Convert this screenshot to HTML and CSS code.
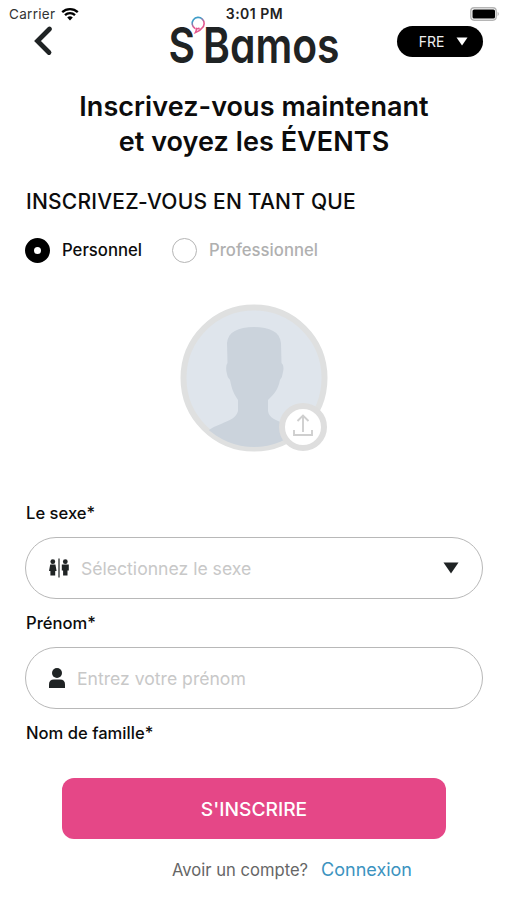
FILE: index.html
```html
<!DOCTYPE html>
<html lang="fr">
<head>
    <meta charset="UTF-8">
    <meta name="viewport" content="width=device-width, initial-scale=1.0">
    <title>S'Bamos - Inscription</title>
    <link rel="stylesheet" href="styles.css">
</head>
<body>

    <div class="status-bar">
        <div class="carrier">
            <span>Carrier</span>
            <svg width="18" height="14" viewBox="0 0 18 14">
                <path d="M1.2 5.2a11.2 11.2 0 0 1 15.6 0M4 8.2a7.2 7.2 0 0 1 10 0" fill="none" stroke="#000" stroke-width="2.3"/>
                <path d="M9 13.6l-2.8-3a4 4 0 0 1 5.6 0z" fill="#000"/>
            </svg>
        </div>
        <span class="time">3:01 PM</span>
        <svg class="battery" width="30" height="14" viewBox="0 0 30 14">
            <rect x="0.8" y="0.8" width="25.4" height="12.4" rx="3.4" fill="#fff" stroke="#b5b5b5" stroke-width="1.4"/>
            <rect x="2.5" y="2.5" width="22.5" height="9" rx="1.6" fill="#000"/>
            <path d="M27.6 4.8q2.6 2.2 0 4.4z" fill="#b5b5b5"/>
        </svg>
    </div>

    <header class="header">
        <button class="back" aria-label="Retour">
            <svg width="20" height="32" viewBox="0 0 20 32">
                <path d="M16.5 4L4.5 16l11.5 11.500" fill="none" stroke="#1f2324" stroke-width="4.8" stroke-linecap="round"/>
            </svg>
        </button>
        <svg class="logo" width="172" height="52" viewBox="0 0 172 52">
            <defs>
                <linearGradient id="bubble" x1="0" y1="0" x2="0.4" y2="1">
                    <stop offset="0.25" stop-color="#3f9dc8"/>
                    <stop offset="0.6" stop-color="#e4588f"/>
                </linearGradient>
            </defs>
            <text x="-1.500" y="47.500" textLength="26.500" lengthAdjust="spacingAndGlyphs">S</text>
            <text x="33" y="47.500" textLength="136.500" lengthAdjust="spacingAndGlyphs">Bamos</text>
            <path d="M25 13.500a6 6 0 1 1 7 -.500q-2 3-6.500 4.500q1.500-2.500 .500-4.500q1.500 1.500 3.500 0" fill="none" stroke="url(#bubble)" stroke-width="1.600"/>
        </svg>
        <button class="lang">
            <span>FRE</span>
            <svg width="12" height="9" viewBox="0 0 12 9"><path d="M.5.500h11L6 8.500z" fill="#fff"/></svg>
        </button>
    </header>

    <main class="content">
        <h1 class="title">Inscrivez-vous maintenant<br>et voyez les ÉVENTS</h1>

        <h2 class="subtitle">INSCRIVEZ-VOUS EN TANT QUE</h2>

        <div class="types">
            <div class="type selected">
                <span class="radio"></span>
                <span>Personnel</span>
            </div>
            <div class="type">
                <span class="radio"></span>
                <span>Professionnel</span>
            </div>
        </div>

        <div class="avatar">
            <svg width="148" height="148" viewBox="0 0 148 148">
                <defs>
                    <clipPath id="face"><circle cx="74" cy="74" r="69"/></clipPath>
                </defs>
                <circle cx="74" cy="74" r="70.500" fill="#dfe5ec" stroke="#dfe0e0" stroke-width="6"/>
                <path clip-path="url(#face)" fill="#cbd3dc" d="M47 39C48 28 58 23 74 23s26 5 27 16l.500 20q3 2 1.500 9-.500 5-3 8c-2 10-6 14-12 20v11c1 7 8 9 17 13q14 5 19 13v20H22v-20q5-8 19-13c9-4 15-6 17-13V96c-4-6-6-10-8-20q-3-3-3.500-8-1-7 1-9z"/>
            </svg>
            <!-- Upload badge -->
            <svg class="upload" width="48" height="48" viewBox="0 0 48 48">
                <circle cx="24" cy="24" r="21" fill="#fff" stroke="#dedede" stroke-width="6"/>
                <path d="M24 29V13M18.500 18l5.500-5.500 5.500 5.500M15 27v5h18v-5" fill="none" stroke="#cfcfcf" stroke-width="1.900"/>
            </svg>
        </div>

        <div class="field">
            <label class="label">Le sexe*</label>
            <div class="input">
                <svg width="20" height="20" viewBox="0 0 20 20" fill="#1f2324">
                    <rect x="9.400" y="0.500" width="1.200" height="19"/>
                    <circle cx="3.800" cy="3.700" r="2.400"/>
                    <path d="M1.200 6.500h5.200l1.200 6.500H6.200v4.500H1.400V13H0z"/>
                    <circle cx="16.300" cy="3.700" r="2.400"/>
                    <path d="M12.800 6.500h7v6h-1.300v5h-4.400v-5h-1.300z"/>
                </svg>
                <span class="placeholder">Sélectionnez le sexe</span>
                <svg class="arrow" width="16" height="12" viewBox="0 0 16 12"><path d="M.5.500h15L8 11.500z" fill="#1f2324"/></svg>
            </div>
        </div>

        <div class="field">
            <label class="label">Prénom*</label>
            <div class="input">
                <svg width="16" height="20" viewBox="0 0 16 20" fill="#1f2324">
                    <circle cx="8" cy="5" r="5"/>
                    <path d="M0 20v-3.500Q0 11.500 5 11.500h6q5 0 5 5V20z"/>
                </svg>
                <span class="placeholder">Entrez votre prénom</span>
            </div>
        </div>

        <div class="field">
            <label class="label">Nom de famille*</label>
        </div>
    </main>

    <footer class="footer">
        <button class="submit">S'INSCRIRE</button>
        <p class="login"><span class="question">Avoir un compte?</span> <a class="link" href="#">Connexion</a></p>
    </footer>

</body>
</html>
```

FILE: styles.css
```css
* {
    box-sizing: border-box;
}
body {
    margin: 0;
    height: 900px;
    overflow: hidden;
    background-color: #fff;
    color: #0c0c0c;
    font-family: Inter, "Liberation Sans", sans-serif;
}
button {
    padding: 0;
    border: none;
    font-family: inherit;
    cursor: pointer;
}
svg {
    display: block;
    flex-shrink: 0;
}
.status-bar {
    display: grid;
    grid-template-columns: 1fr auto 1fr;
    align-items: center;
    height: 26px;
    padding: 1px 7px 0 9px;
    font-size: 13px;
    color: #333;
}
.carrier {
    display: flex;
    align-items: center;
    gap: 6px;
    font-size: 13.5px;
    letter-spacing: 0.3px;
}
.time {
    font-size: 14px;
    letter-spacing: 0.5px;
    font-weight: 600;
    color: #222;
}
.battery {
    justify-self: end;
}
.header {
    display: flex;
    align-items: center;
    justify-content: space-between;
    height: 30px;
    padding: 0 24px 0 33px;
}
.back {
    background: none;
}
.logo {
    margin-left: 61px;
    overflow: visible;
    font-size: 50px;
    font-weight: 600;
    font-feature-settings: "cv11"; /* round single-storey a */
    fill: #1f2324;
}
.lang {
    display: flex;
    align-items: center;
    justify-content: center;
    gap: 12px;
    width: 86px;
    height: 31px;
    padding-left: 7px;
    border-radius: 16px;
    background-color: #000;
    color: #eee;
    font-size: 14px;
}
.content {
    padding: 33px 24px 0 25px;
}
.title {
    margin: 0;
    font-size: 27px;
    line-height: 35px;
    font-weight: 600;
    letter-spacing: 0.06px;
    text-align: center;
}
.subtitle {
    margin: 30px 0 0 1px;
    font-size: 21px;
    line-height: 26px;
    font-weight: 500;
    letter-spacing: 0.22px;
}
.types {
    display: flex;
    gap: 30px;
    margin-top: 22px;
}
.type {
    display: flex;
    align-items: center;
    gap: 12px;
    height: 26px;
    font-size: 16.7px;
    font-weight: 500;
    color: #b0b0b0;
}
.type.selected {
    color: #0c0c0c;
}
.radio {
    width: 25px;
    height: 25px;
    border: 1.5px solid #b5b5b5;
    border-radius: 50%;
}
.selected .radio {
    border: 9px solid #000;
}
.avatar {
    position: relative;
    width: 148px;
    margin: 41px auto 49px;
}
.upload {
    position: absolute;
    right: 1px;
    bottom: 1px;
}
.field {
    height: 110px;
}
.label {
    display: block;
    height: 25px;
    padding-left: 1px;
    line-height: 25px;
    font-size: 16.6px;
    font-weight: 500;
}
.input {
    display: flex;
    align-items: center;
    gap: 12px;
    height: 62px;
    margin-top: 11px;
    padding: 0 23px;
    border: 1.5px solid #b8b8b8;
    border-radius: 31px;
}
.placeholder {
    font-size: 17.6px;
    color: #c8c8c8;
}
.arrow {
    margin-left: auto;
}
.footer {
    position: absolute;
    left: 0;
    right: 0;
    bottom: 0;
    height: 140px;
    padding: 18px 61px 0 62px;
    background-color: #fff;
}
.submit {
    width: 100%;
    height: 61px;
    border-radius: 12px;
    background-color: #e54787;
    color: #fff;
    font-size: 19.2px;
    font-weight: 500;
}
.login {
    display: flex;
    justify-content: flex-end;
    gap: 13px;
    margin: 19px 34px 0 0;
    font-size: 18px;
    line-height: 24px;
}
.question {
    font-size: 16.6px;
    color: #666;
}
.link {
    color: #3c93bf;
    text-decoration: none;
}
```
